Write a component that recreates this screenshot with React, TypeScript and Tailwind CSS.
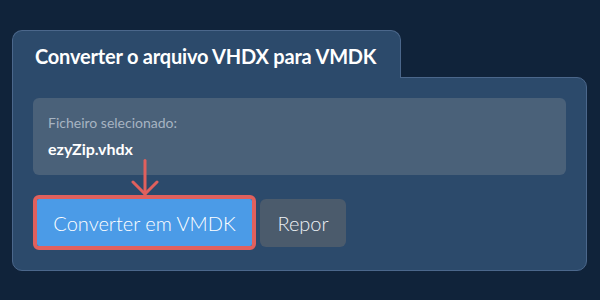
import React from "react";

export default function App() {
  return (
    <div
      className="w-[600px] h-[300px] bg-[#10233a] pt-[30px] pl-[12px] overflow-hidden"
      style={{ fontFamily: "Lato, 'Noto Sans', sans-serif" }}
    >
      <div className="w-[575px]">
        <div className="relative z-10 -mb-px w-[389px] h-[48px] bg-[#2c4a6b] border-t border-l border-r border-[#4b678b] rounded-t-[10px] pl-[22px] pt-[11px]">
          <h1 className="text-[20px] leading-[28px] font-bold tracking-[-0.2px] text-white">
            Converter o arquivo VHDX para VMDK
          </h1>
        </div>
        <div className="bg-[#2c4a6b] border border-[#4b678b] rounded-tr-[10px] rounded-b-[10px] p-5">
          <div className="bg-[#4a6179] rounded-[6px] px-[15px] pt-[15px] pb-[15px]">
            <div className="text-[14px] leading-[20px] text-[#a7b4c2]">
              Ficheiro selecionado:
            </div>
            <div className="mt-[5px] text-[16px] leading-[22px] font-bold text-white">
              ezyZip.vhdx
            </div>
          </div>
          <div className="mt-5 flex items-center">
            <div className="relative border-4 border-[#e0605d] rounded-[6px]">
              <svg
                className="absolute left-1/2 -translate-x-1/2 bottom-full mb-[3px]"
                width="28"
                height="37"
                viewBox="0 0 28 37"
                fill="none"
                stroke="#e0605d"
                strokeWidth="3"
                strokeLinecap="round"
                strokeLinejoin="round"
              >
                <line x1="14" y1="1.5" x2="14" y2="35" />
                <polyline points="2,23 14,35 26,23" />
              </svg>
              <button className="w-[215px] h-[47px] bg-[#4b9be7] text-[20px] font-light text-white rounded-[2px]">
                Converter em VMDK
              </button>
            </div>
            <button className="ml-1 w-[86px] h-12 bg-[#4b5b6c] text-[20px] font-light text-[#eef2f6] rounded-[6px]">
              Repor
            </button>
          </div>
        </div>
      </div>
    </div>
  );
}
